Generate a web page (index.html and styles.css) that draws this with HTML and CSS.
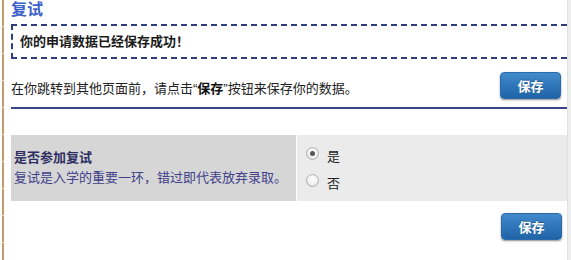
FILE: index.html
```html
<!DOCTYPE html>
<html lang="zh-CN">
<head>
<meta charset="utf-8">
<title>复试</title>
<link rel="stylesheet" href="styles.css">
</head>
<body>
<div class="page">
  <div class="edge-left"></div>
  <main class="main">
    <h1 class="title">复试</h1>
    <div class="notice">你的申请数据已经保存成功！</div>
    <div class="save-row">
      <p class="hint">在你跳转到其他页面前，请点击“<b>保存</b>”按钮来保存你的数据。</p>
      <button class="btn" type="button">保存</button>
    </div>
    <div class="panel">
      <div class="panel-label">
        <div class="q-title">是否参加复试</div>
        <div class="q-desc">复试是入学的重要一环，错过即代表放弃录取。</div>
      </div>
      <div class="panel-options">
        <label class="opt"><input type="radio" name="retest" checked><span>是</span></label>
        <label class="opt"><input type="radio" name="retest"><span>否</span></label>
      </div>
    </div>
    <div class="bottom-row">
      <button class="btn" type="button">保存</button>
    </div>
  </main>
  <div class="edge-right"></div>
</div>
</body>
</html>
```
FILE: styles.css
```css
html, body {
  margin: 0;
  padding: 0;
  background: #fff;
}
body {
  font-family: "Liberation Sans", "Noto Sans CJK SC", sans-serif;
  font-size: 13px;
  color: #222;
}
.page {
  display: flex;
  width: 571px;
  height: 260px;
  overflow: hidden;
}
.edge-left {
  flex: 0 0 2px;
  margin-left: 2px;
  background: repeating-linear-gradient(to bottom, #bf9c6b 0 26px, #e9dcc6 26px 27px);
}
.main {
  flex: 1;
  margin-left: 7px;
  min-width: 0;
}
.edge-right {
  flex: 0 0 3px;
  background: #ededed;
  border-left: 1px solid #e2e2e2;
}
.title {
  margin: 0;
  font-size: 16px;
  line-height: 20px;
  font-weight: bold;
  color: #3c62c9;
}
.notice {
  margin-top: 4px;
  height: 31px;
  line-height: 31px;
  border: 2px dashed #2f3d7e;
  border-right: none;
  padding-left: 7px;
  font-weight: bold;
  font-size: 13px;
  color: #1a1a1a;
}
.save-row {
  display: flex;
  align-items: flex-end;
  justify-content: space-between;
  margin-top: 13px;
  padding: 0 6px 8px 0;
  border-bottom: 2px solid #3a4588;
}
.hint {
  margin: 0;
  line-height: 20px;
  color: #222;
}
.hint b {
  color: #111;
}
.btn {
  width: 61px;
  height: 27px;
  padding: 0;
  border: 1px solid #2a6aab;
  border-radius: 4px;
  background: linear-gradient(to bottom, #428bcb 0%, #2f76b9 50%, #1f64a6 100%);
  box-shadow: 0 1px 2px rgba(0, 0, 0, 0.45);
  color: #fff;
  font-family: "Liberation Sans", "Noto Sans CJK SC", sans-serif;
  font-size: 13px;
  font-weight: bold;
  text-shadow: 0 -1px 0 rgba(0, 0, 0, 0.3);
}
.panel {
  display: grid;
  grid-template-columns: 285px 1fr;
  column-gap: 1px;
  margin-top: 26px;
  height: 66px;
}
.panel-label {
  background: #d6d6d6;
  padding: 13px 0 0 3px;
  line-height: 20px;
}
.q-title {
  font-weight: bold;
  color: #2e2e62;
}
.q-desc {
  color: #41418a;
}
.panel-options {
  background: #ebebeb;
  padding: 5px 0 0 9px;
}
.opt {
  display: flex;
  align-items: center;
  height: 27px;
  color: #222;
}
.opt input {
  appearance: none;
  -webkit-appearance: none;
  width: 13px;
  height: 13px;
  margin: 0 8px 0 0;
  border: 1px solid #b3b3b3;
  border-radius: 50%;
  background: radial-gradient(circle at 50% 35%, #ffffff 0%, #f2f2f2 50%, #d8d8d8 100%);
  box-shadow: inset 0 0 1px rgba(0, 0, 0, 0.1);
  position: relative;
}
.opt input:checked::after {
  content: "";
  position: absolute;
  left: 3px;
  top: 3px;
  width: 5px;
  height: 5px;
  border-radius: 50%;
  background: #555;
}
.opt span {
  padding-top: 3px;
}
.bottom-row {
  display: flex;
  justify-content: flex-end;
  margin-top: 12px;
  padding-right: 5px;
}
```
